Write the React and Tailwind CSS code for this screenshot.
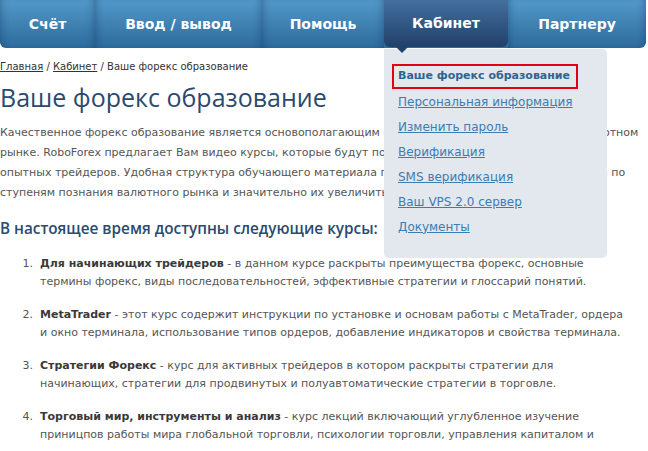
import React from "react";

const navItems = [
  { label: "Счёт", cls: "w-[95px]" },
  { label: "Ввод / вывод", cls: "w-[167px]" },
  { label: "Помощь", cls: "w-[122px]" },
  { label: "Кабинет", cls: "w-[124px]", active: true },
  { label: "Партнеру", cls: "w-[138px]" },
];

const menu = [
  "Персональная информация",
  "Изменить пароль",
  "Верификация",
  "SMS верификация",
  "Ваш VPS 2.0 сервер",
  "Документы",
];

const paragraph = [
  "Качественное форекс образование является основополагающим фактором успешной торговли на валютном",
  "рынке. RoboForex предлагает Вам видео курсы, которые будут полезны как для начинающих, так и",
  "опытных трейдеров. Удобная структура обучающего материала позволяет Вам поэтапно продвигаться по",
  "ступеням познания валютного рынка и значительно их увеличить.",
];

const courses = [
  {
    title: "Для начинающих трейдеров",
    lines: [
      " - в данном курсе раскрыты преимущества форекс, основные",
      "термины форекс, виды последовательностей, эффективные стратегии и глоссарий понятий.",
    ],
  },
  {
    title: "MetaTrader",
    lines: [
      " - этот курс содержит инструкции по установке и основам работы с MetaTrader, ордера",
      "и окно терминала, использование типов ордеров, добавление индикаторов и свойства терминала.",
    ],
  },
  {
    title: "Стратегии Форекс",
    lines: [
      " - курс для активных трейдеров в котором раскрыты стратегии для",
      "начинающих, стратегии для продвинутых и полуавтоматические стратегии в торговле.",
    ],
  },
  {
    title: "Торговый мир, инструменты и анализ",
    lines: [
      " - курс лекций включающий углубленное изучение",
      "приницпов работы мира глобальной торговли, психологии торговли, управления капиталом и",
    ],
  },
];

export default function App() {
  return (
    <div className="relative w-[648px] h-[451px] overflow-hidden bg-white font-['DejaVu_Sans',sans-serif]">
      {/* Top navigation */}
      <nav className="flex w-[646px] h-[48px] rounded-b-[6px] bg-gradient-to-b from-[#5299c9] to-[#2d6b9c] overflow-hidden">
        {navItems.map((it) =>
          it.active ? (
            <div
              key={it.label}
              className={`${it.cls} h-[47px] flex items-center justify-center rounded-b-[6px] bg-gradient-to-b from-[#44709f] to-[#21406a] text-white text-[14px] font-bold`}
            >
              {it.label}
            </div>
          ) : (
            <div
              key={it.label}
              className={`${it.cls} h-full flex items-center justify-center text-white text-[14px] font-bold shadow-[inset_-7px_0_9px_-7px_rgba(10,40,80,0.45),inset_7px_0_9px_-7px_rgba(10,40,80,0.45)]`}
            >
              {it.label}
            </div>
          )
        )}
      </nav>

      {/* Content */}
      <div className="pt-[12px] text-[#555]">
        <div className="text-[10px] leading-[14px] text-[#333] whitespace-nowrap">
          <a className="underline">Главная</a> / <a className="underline">Кабинет</a> / Ваше форекс образование
        </div>
        <h1 className="mt-[8px] font-['Open_Sans',sans-serif] text-[25px] leading-[30px] text-[#2c4a6e]">
          Ваше форекс образование
        </h1>
        <div className="mt-[11px] text-[11px] leading-[20px]">
          {paragraph.map((l) => (
            <div key={l} className="whitespace-nowrap">{l}</div>
          ))}
        </div>
        <h2 className="mt-[14px] font-['Open_Sans',sans-serif] font-semibold text-[15.3px] leading-[22px] text-[#2c4a6e]">
          В настоящее время доступны следующие курсы:
        </h2>
        <ol className="mt-[16px] flex flex-col gap-[15px] text-[11px] leading-[18px]">
          {courses.map((c, i) => (
            <li key={c.title} className="flex">
              <span className="w-[40px] shrink-0 pr-[7px] text-right">{i + 1}.</span>
              <div>
                <div className="whitespace-nowrap">
                  <b className="text-[#3a3a3a]">{c.title}</b>
                  {c.lines[0]}
                </div>
                <div className="whitespace-nowrap">{c.lines[1]}</div>
              </div>
            </li>
          ))}
        </ol>
      </div>

      {/* Dropdown menu */}
      <div className="absolute left-[384px] top-[49px] w-[223px] h-[209px] rounded-[5px] rounded-tl-none bg-[#e3e8ef] px-[8px] pt-[15px]">
        <div className="h-[25px] flex items-center">
          <span className="h-[25px] border-2 border-[#e3000f] pl-[4px] pr-[6px] flex items-center text-[11px] font-bold text-[#2f6490]">
            Ваше форекс образование
          </span>
        </div>
        {menu.map((m) => (
          <div key={m} className="h-[25px] flex items-center pl-[6px]">
            <a className="text-[12px] text-[#3b7cb1] underline">{m}</a>
          </div>
        ))}
      </div>
      <div className="absolute left-[396px] top-[47px] w-0 h-0 border-l-[6px] border-r-[6px] border-t-[6px] border-l-transparent border-r-transparent border-t-[#22416b]" />
    </div>
  );
}
